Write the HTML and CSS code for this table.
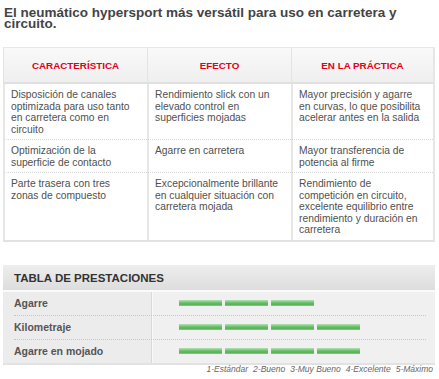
FILE: index.html
```html
<!DOCTYPE html>
<html lang="es">
<head>
<meta charset="utf-8">
<title>Hypersport</title>
<link rel="stylesheet" href="styles.css">
</head>
<body>
<h1 class="title">El neumático hypersport más versátil para uso en carretera y circuito.</h1>

<div class="spec">
  <div class="spec-head">
    <div class="hcell">CARACTERÍSTICA</div>
    <div class="hcell">EFECTO</div>
    <div class="hcell">EN LA PRÁCTICA</div>
  </div>
  <div class="spec-body">
    <div class="cell">Disposición de canales optimizada para uso tanto en carretera como en circuito</div>
    <div class="cell">Rendimiento slick con un elevado control en superficies mojadas</div>
    <div class="cell">Mayor precisión y agarre en curvas, lo que posibilita acelerar antes en la salida</div>

    <div class="cell sep">Optimización de la superficie de contacto</div>
    <div class="cell sep">Agarre en carretera</div>
    <div class="cell sep">Mayor transferencia de potencia al firme</div>

    <div class="cell sep">Parte trasera con tres zonas de compuesto</div>
    <div class="cell sep">Excepcionalmente brillante en cualquier situación con carretera mojada</div>
    <div class="cell sep">Rendimiento de competición en circuito, excelente equilibrio entre rendimiento y duración en carretera</div>
  </div>
</div>

<div class="perf">
  <div class="perf-head">TABLA DE PRESTACIONES</div>
  <div class="perf-body">
    <div class="prow">
      <div class="plabel">Agarre</div>
      <div class="bars"><span class="bar"></span><span class="bar"></span><span class="bar"></span></div>
    </div>
    <div class="psep"></div>
    <div class="prow">
      <div class="plabel">Kilometraje</div>
      <div class="bars"><span class="bar"></span><span class="bar"></span><span class="bar"></span><span class="bar"></span></div>
    </div>
    <div class="psep"></div>
    <div class="prow">
      <div class="plabel">Agarre en mojado</div>
      <div class="bars"><span class="bar"></span><span class="bar"></span><span class="bar"></span><span class="bar"></span></div>
    </div>
  </div>
</div>

<div class="legend">
  <span>1-Estándar</span><span>2-Bueno</span><span>3-Muy Bueno</span><span>4-Excelente</span><span>5-Máximo</span>
</div>
</body>
</html>
```

FILE: styles.css
```css
* { box-sizing: border-box; }

body {
  margin: 0;
  background: #fff;
  font-family: "Liberation Sans", Arial, sans-serif;
}

.title {
  margin: 7px 0 0 4px;
  width: 430px;
  font-size: 13.5px;
  line-height: 11px;
  font-weight: bold;
  color: #444;
}

/* ---------- specification table ---------- */
.spec {
  margin: 18px 0 0 3px;
  width: 432px;
  border-right: 2px solid #e6e6e6;
  border-bottom: 2px solid #e2e2e2;
  border-top: 1px solid #e8e8e8;
}

.spec-head {
  display: grid;
  grid-template-columns: 144px 144px 142px;
  height: 36px;
  background: linear-gradient(#f9f9f9, #efefef);
  border-bottom: 2px solid #e0e0e0;
}

.hcell {
  display: flex;
  align-items: center;
  justify-content: center;
  border-left: 1px solid #e4e4e4;
  color: #e2001a;
  font-weight: bold;
  font-size: 9.8px;
}

.spec-body {
  display: grid;
  grid-template-columns: 144px 144px 142px;
  background: #fff;
}

.cell {
  border-left: 2px solid #e6e6e6;
  padding: 5px 10px 4px 6px;
  font-size: 10.3px;
  line-height: 11.5px;
  color: #505050;
}

.cell:nth-child(3n+2) { padding-right: 7px; }
.cell:nth-child(3n) { padding-right: 9px; }

.cell.sep { border-top: 1px dotted #d6d6d6; }

/* ---------- performance table ---------- */
.perf {
  margin: 23px 0 0 3px;
  width: 432px;
  border-bottom: 2px solid #e2e2e2;
}

.perf-head {
  display: flex;
  align-items: center;
  height: 27px;
  padding: 2px 0 0 11px;
  background: linear-gradient(#eeeeee, #dddddd);
  border-bottom: 2px solid #fafafa;
  font-weight: bold;
  font-size: 11.5px;
  color: #333;
}

.perf-body {
  background: linear-gradient(to right, #ececec 0, #ececec 148px, #d9d9d9 148px, #d9d9d9 149px, #f8f8f8 149px, #f8f8f8 150px, #f0f0f0 150px);
}

.prow {
  display: grid;
  grid-template-columns: 150px 1fr;
  height: 23px;
  align-items: center;
}

.plabel {
  padding-left: 11px;
  font-weight: bold;
  font-size: 10.5px;
  color: #555;
}

.bars {
  display: flex;
  gap: 3px;
  padding-left: 26px;
}

.bar {
  width: 43px;
  height: 6px;
  background: linear-gradient(#b4e2b4 0%, #79c779 35%, #52b052 70%, #86cc86 100%);
}

.psep {
  margin: 0 9px 0 11px;
  border-top: 1px dotted #c6c6c6;
}

.legend {
  display: flex;
  justify-content: flex-end;
  gap: 5px;
  width: 433px;
  margin-top: 0;
  font-size: 8.5px;
  line-height: 9px;
  font-style: italic;
  color: #666;
}
```
